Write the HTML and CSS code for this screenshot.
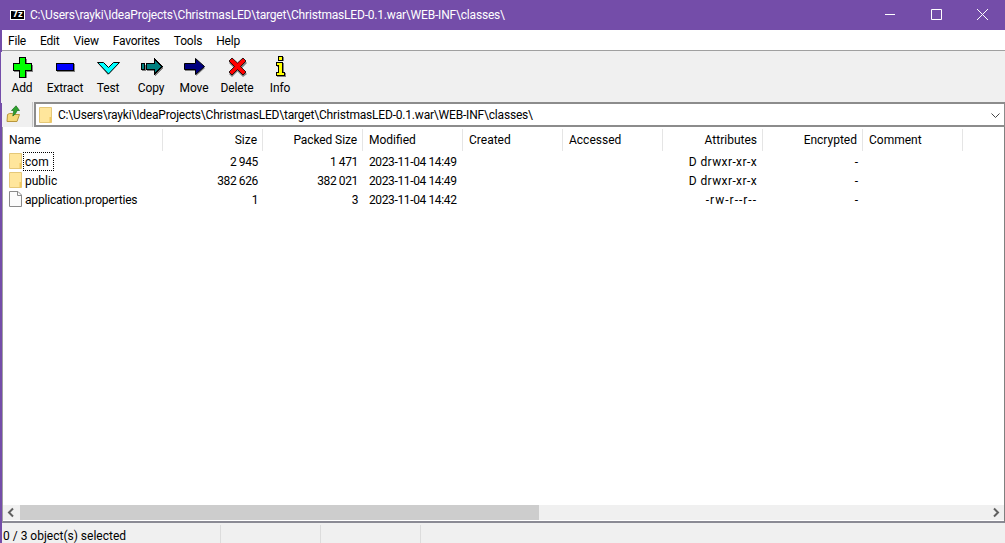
FILE: index.html
```html
<!DOCTYPE html>
<html lang="en">
<head>
    <meta charset="UTF-8">
    <title>7-Zip File Manager</title>
    <link rel="stylesheet" href="styles.css">
</head>
<body>
<div class="window">

    <!-- Title bar -->
    <div class="titlebar">
        <span class="app-icon"><span class="app-icon-text">7z</span></span>
        <span class="title path">C:\Users\rayki\IdeaProjects\ChristmasLED\target\ChristmasLED-0.1.war\WEB-INF\classes\</span>
        <div class="win-buttons">
            <svg class="win-btn" viewBox="0 0 46 30"><path d="M18 14.500h10" stroke="#fff" fill="none"/></svg>
            <svg class="win-btn" viewBox="0 0 46 30"><path d="M18.500 9.500h10v10h-10z" stroke="#fff" fill="none"/></svg>
            <svg class="win-btn" viewBox="0 0 46 30"><path d="M18 9l11 11M29 9L18 20" stroke="#fff" fill="none"/></svg>
        </div>
    </div>

    <!-- Menu -->
    <div class="menubar">
        <span>File</span>
        <span>Edit</span>
        <span>View</span>
        <span>Favorites</span>
        <span>Tools</span>
        <span>Help</span>
    </div>

    <!-- Toolbar -->
    <div class="toolbar">
        <div class="tool">
            <svg class="tool-icon" viewBox="0 0 23 23" shape-rendering="crispEdges">
                <path d="M9 4h7v6h6v7h-6v6H9v-6H3v-7h6z" fill="#808080"/>
                <path d="M8 2.500h6v6h6.500v7H14V22H8v-6.500H2.500v-7H8z" fill="#00ff00" stroke="#000"/>
            </svg>
            <span class="tool-label">Add</span>
        </div>
        <div class="tool">
            <svg class="tool-icon" viewBox="0 0 23 23" shape-rendering="crispEdges">
                <path d="M3 9h18v8H3z" fill="#808080"/>
                <path d="M2.500 8.500h17v7h-17z" fill="#0000ff" stroke="#000"/>
            </svg>
            <span class="tool-label">Extract</span>
        </div>
        <div class="tool">
            <svg class="tool-icon" viewBox="0 0 23 23">
                <path d="M1 8h6l4 5 5-5h6L11 20z" fill="#808080"/>
                <path d="M0.500 7.500h6l5 5 5-5h6L11.500 19z" fill="#00ffff" stroke="#000"/>
            </svg>
            <span class="tool-label">Test</span>
        </div>
        <div class="tool">
            <svg class="tool-icon" viewBox="0 0 23 23" shape-rendering="crispEdges">
                <path d="M2 10h4v6H2zM7 10h8V5l8 8-8 8v-5H7z" fill="#808080"/>
                <path d="M1.500 8.500h3v6h-3z" fill="#008080" stroke="#000"/>
                <path d="M6.500 8.500H14v-5l8 8-8 8v-5H6.500z" fill="#008080" stroke="#000"/>
            </svg>
            <span class="tool-label">Copy</span>
        </div>
        <div class="tool">
            <svg class="tool-icon" viewBox="0 0 23 23">
                <path d="M2 10h11V5l9 8-9 8v-5H2z" fill="#808080"/>
                <path d="M1.500 8.500H12.500v-5l9 8-9 8v-5H1.500z" fill="#000080" stroke="#000"/>
            </svg>
            <span class="tool-label">Move</span>
        </div>
        <div class="tool">
            <svg class="tool-icon" viewBox="0 0 23 23">
                <path d="M6 4l5.500 5L17 4l4 4-5.500 5.500L21 19l-4 3-5.500-5.500L6 22l-3-3 5.500-5.500L3 8z" fill="#808080"/>
                <path d="M6 3l5.500 5L17 3l3 3-5.500 5.500L20 17l-3 3-5.500-5.500L6 20l-3-3 5.500-5.500L3 6z" fill="#ff0000" stroke="#000" stroke-width="0.800"/>
            </svg>
            <span class="tool-label">Delete</span>
        </div>
        <div class="tool">
            <svg class="tool-icon" viewBox="0 0 23 23" shape-rendering="crispEdges">
                <path d="M10 2h5v4h-5zM8 8h7v10h2v4H8v-4h2v-6H8z" fill="#808080"/>
                <path d="M9.500 1.500h4v4h-4zM7.500 7.500h6v10h2v3h-8v-3h2v-7h-2z" fill="#ffff00" stroke="#000"/>
            </svg>
            <span class="tool-label">Info</span>
        </div>
    </div>

    <!-- Address row -->
    <div class="addressbar">
        <svg class="up-btn" viewBox="0 0 16 18">
            <path d="M1.500 9.500l2-1h3l1 1h6l-2.500 7h-10z" fill="#f6d978" stroke="#b8963c"/>
            <path d="M10 0.800L5.500 5.500h2.300l-1 5.500c2 -1 3.500 -3 4.200 -5.500h2.500z" fill="#2fa12f" stroke="#1c6e1c" stroke-width="0.700"/>
        </svg>
        <div class="address-sep"></div>
        <div class="address">
            <svg class="folder" viewBox="0 0 13 16">
                <path d="M0.500 0.500h12v15H0.500z" fill="#ffe69c" stroke="#e5c878"/>
                <path d="M10.500 10v5.500h2V10z" fill="#f0c860"/>
            </svg>
            <span class="address-text path">C:\Users\rayki\IdeaProjects\ChristmasLED\target\ChristmasLED-0.1.war\WEB-INF\classes\</span>
            <svg class="combo-arrow" viewBox="0 0 9 5"><path d="M0.500 0.500l4 4 4-4" fill="none" stroke="#444"/></svg>
        </div>
    </div>

    <!-- File list -->
    <div class="list">
        <div class="row header">
            <div class="cell sep">Name</div>
            <div class="cell right sep">Size</div>
            <div class="cell right sep packed">Packed Size</div>
            <div class="cell sep">Modified</div>
            <div class="cell sep">Created</div>
            <div class="cell sep">Accessed</div>
            <div class="cell right sep">Attributes</div>
            <div class="cell right sep">Encrypted</div>
            <div class="cell sep">Comment</div>
        </div>
        <div class="row item">
            <div class="cell name">
                <svg class="folder" viewBox="0 0 13 16"><path d="M0.500 0.500h12v15H0.500z" fill="#ffe69c" stroke="#e5c878"/><path d="M10.500 10v5.500h2V10z" fill="#f0c860"/></svg>
                <span class="focused">com</span>
            </div>
            <div class="cell right num">2 945</div>
            <div class="cell right num">1 471</div>
            <div class="cell num">2023-11-04 14:49</div>
            <div class="cell"></div>
            <div class="cell"></div>
            <div class="cell right attr">D drwxr-xr-x</div>
            <div class="cell right">-</div>
            <div class="cell"></div>
        </div>
        <div class="row item">
            <div class="cell name">
                <svg class="folder" viewBox="0 0 13 16"><path d="M0.500 0.500h12v15H0.500z" fill="#ffe69c" stroke="#e5c878"/><path d="M10.500 10v5.500h2V10z" fill="#f0c860"/></svg>
                <span class="plain">public</span>
            </div>
            <div class="cell right num">382 626</div>
            <div class="cell right num">382 021</div>
            <div class="cell num">2023-11-04 14:49</div>
            <div class="cell"></div>
            <div class="cell"></div>
            <div class="cell right attr">D drwxr-xr-x</div>
            <div class="cell right">-</div>
            <div class="cell"></div>
        </div>
        <div class="row item">
            <div class="cell name">
                <svg class="folder" viewBox="0 0 13 16"><path d="M0.500 0.500h8.500l3.500 3.500v11.500H0.500z" fill="#fbfbfb" stroke="#8a8a8a"/><path d="M8.500 0.500v4h4" fill="none" stroke="#8a8a8a"/></svg>
                <span class="plain path">application.properties</span>
            </div>
            <div class="cell right num">1</div>
            <div class="cell right num">3</div>
            <div class="cell num">2023-11-04 14:42</div>
            <div class="cell"></div>
            <div class="cell"></div>
            <div class="cell right attr wide">-rw-r--r--</div>
            <div class="cell right">-</div>
            <div class="cell"></div>
        </div>
        <div class="list-space"></div>
        <div class="hscroll">
            <svg class="scroll-arrow" viewBox="0 0 17 15"><path d="M10 3.500L6 7.500l4 4" fill="none" stroke="#606060" stroke-width="2"/></svg>
            <div class="track"><div class="thumb"></div></div>
            <svg class="scroll-arrow" viewBox="0 0 17 15"><path d="M7 3.500l4 4-4 4" fill="none" stroke="#606060" stroke-width="2"/></svg>
        </div>
    </div>

    <!-- Status bar -->
    <div class="statusbar">
        <div class="status-cell first">0 / 3 object(s) selected</div>
        <div class="status-cell"></div>
        <div class="status-cell"></div>
        <div class="status-cell last"></div>
    </div>

</div>
</body>
</html>
```

FILE: styles.css
```css
* {
    box-sizing: border-box;
}

html, body {
    margin: 0;
    padding: 0;
    height: 100%;
    overflow: hidden;
}

body {
    font-family: 'Roboto', 'Open Sans', sans-serif;
    font-size: 12px;
    color: #000;
}

.window {
    width: 1005px;
    height: 543px;
    display: flex;
    flex-direction: column;
    background-color: #f0f0f0;
    border-left: 2px solid #744da9;
}

.path {
    letter-spacing: -0.19px;
}

/* Title bar */
.titlebar {
    height: 30px;
    margin-left: -2px;
    padding-left: 10px;
    display: flex;
    align-items: center;
    background-color: #744da9;
    color: #fff;
}

.app-icon {
    width: 15px;
    height: 10px;
    margin-right: 5px;
    display: flex;
    align-items: center;
    justify-content: center;
    background-color: #000;
    border: 1px solid #fff;
}

.app-icon-text {
    font-family: 'DejaVu Sans', sans-serif;
    font-size: 8px;
    font-weight: bold;
    line-height: 8px;
    color: #fff;
}

.title {
    flex: 1;
    white-space: nowrap;
}

.win-buttons {
    display: flex;
}

.win-btn {
    width: 46px;
    height: 30px;
}

/* Menu */
.menubar {
    height: 21px;
    padding: 1px 0 0 6px;
    display: flex;
    align-items: center;
    gap: 14px;
    background-color: #fff;
    border-bottom: 1px solid #a0a0a0;
    letter-spacing: -0.2px;
}

/* Toolbar */
.toolbar {
    height: 51px;
    padding-top: 3px;
    margin-top: 1px;
    margin-left: -1px;
    display: flex;
    background-color: #f0f0f0;
}

.tool {
    width: 43px;
    display: flex;
    flex-direction: column;
    align-items: center;
}

.tool-icon {
    width: 23px;
    height: 23px;
    margin-bottom: 3px;
}

.tool-label {
    margin-right: 1px;
    letter-spacing: -0.1px;
}

/* Address row */
.addressbar {
    height: 25px;
    margin-top: -1px;
    display: flex;
    align-items: stretch;
}

.up-btn {
    width: 16px;
    height: 18px;
    margin: 3px 10px 0 4px;
}

.address-sep {
    width: 1px;
    margin-right: 1px;
    background-color: #c8c8c8;
}

.address {
    flex: 1;
    padding: 1px 0 0 3px;
    display: flex;
    align-items: center;
    background-color: #fff;
    border: 2px solid #8c8c8c;
    border-right-width: 1px;
}

.address .folder {
    margin-right: 6px;
}

.address-text {
    flex: 1;
    white-space: nowrap;
}

.combo-arrow {
    width: 9px;
    height: 5px;
    margin-right: 4px;
}

/* File list */
.list {
    flex: 1;
    display: flex;
    flex-direction: column;
    background-color: #fff;
    border-left: 1px solid #a0a0a0;
    border-right: 1px solid #808080;
    border-bottom: 2px solid #8a8a94;
}

.row {
    display: grid;
    grid-template-columns: 160px repeat(8, 100px);
}

.header {
    height: 25px;
    padding-top: 2px;
}

.header .cell {
    height: 22px;
    line-height: 23px;
}

.item {
    height: 19px;
}

.item .cell {
    padding-top: 1px;
    line-height: 19px;
}

.cell {
    padding: 0 5px 0 6px;
    white-space: nowrap;
}

.right {
    text-align: right;
}

.sep {
    border-right: 1px solid #e5e5e5;
}

.packed {
    letter-spacing: -0.1px;
}

.num {
    letter-spacing: -0.37px;
}

.attr {
    padding-right: 6px;
    letter-spacing: 0.4px;
}

.attr.wide {
    letter-spacing: 1px;
}

.name {
    display: flex;
    align-items: flex-start;
}

.folder {
    width: 13px;
    height: 16px;
    flex-shrink: 0;
}

.focused {
    margin: -1px 0 0 1px;
    padding: 2px 5px 0 2px;
    line-height: 17px;
    outline: 1px dotted #000;
    outline-offset: -1px;
}

.plain {
    margin-left: 3px;
}

.list-space {
    flex: 1;
}

.hscroll {
    height: 15px;
    margin-bottom: 1px;
    display: flex;
    background-color: #f0f0f0;
}

.scroll-arrow {
    width: 17px;
    height: 15px;
    flex-shrink: 0;
}

.track {
    flex: 1;
}

.thumb {
    width: 519px;
    height: 100%;
    background-color: #cdcdcd;
}

/* Status bar */
.statusbar {
    height: 20px;
    display: flex;
    background-color: #f0f0f0;
}

.status-cell {
    width: 100px;
    margin-top: 2px;
    border-right: 1px solid #dcdcdc;
}

.status-cell.first {
    width: 219px;
    padding-left: 1px;
    line-height: 23px;
}

.status-cell.last {
    flex: 1;
    border-right: none;
}
```
